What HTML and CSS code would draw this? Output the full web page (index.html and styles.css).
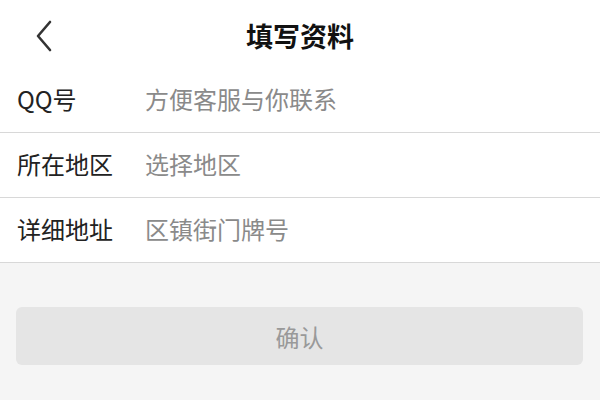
FILE: index.html
```html
<!DOCTYPE html>
<html>

<head>
	<meta charset="UTF-8">
	<meta name="viewport" content="width=device-width, initial-scale=1.0">
	<title>填写资料</title>
	<link rel="stylesheet" href="styles.css">
</head>

<body>
	<header class="topbar">
		<button class="btn-back" aria-label="返回">
			<svg width="18" height="32" viewBox="0 0 18 32">
				<path d="M15 2 L3 16 L15 30" fill="none" stroke="#333" stroke-width="2.6" stroke-linecap="round" stroke-linejoin="round"/>
			</svg>
		</button>
		<h1 class="title">填写资料</h1>
		<span class="spacer"></span>
	</header>

	<div class="form">
		<label class="row">
			<span class="label">QQ号</span>
			<input type="text" class="field" placeholder="方便客服与你联系">
		</label>
		<label class="row">
			<span class="label">所在地区</span>
			<input type="text" class="field" placeholder="选择地区">
		</label>
		<label class="row">
			<span class="label">详细地址</span>
			<input type="text" class="field" placeholder="区镇街门牌号">
		</label>
	</div>

	<div class="actions">
		<button class="btn-confirm" disabled>确认</button>
	</div>
</body>

</html>
```

FILE: styles.css
```css
* {
	margin: 0px;
	padding: 0px;
	box-sizing: border-box;
}

body {
	background-color: #f5f5f5;
	font-family: "Noto Sans CJK SC", "Noto Sans", sans-serif;
	color: #222;
	height: 400px;
}

.topbar {
	height: 68px;
	display: flex;
	align-items: center;
	background-color: #fff;
	padding: 0 20px;
}

.btn-back {
	width: 48px;
	height: 40px;
	display: flex;
	align-items: center;
	padding-left: 15px;
	padding-top: 4px;
	border: none;
	background: none;
}

.title {
	flex: 1;
	text-align: center;
	font-size: 27px;
	font-weight: bold;
	color: #111;
	margin-top: 2px;
}

.spacer {
	width: 48px;
}

.form {
	background-color: #fff;
}

.row {
	height: 65px;
	display: flex;
	align-items: center;
	padding-left: 17px;
	padding-bottom: 3px;
	border-bottom: 1px solid #d8d8d8;
}

.label {
	width: 128px;
	font-size: 24px;
	color: #222;
}

.field {
	flex: 1;
	border: none;
	outline: none;
	font-family: inherit;
	font-size: 24px;
	color: #222;
	background: transparent;
}

.field::placeholder {
	color: #8a8a8a;
}

.actions {
	padding: 44px 17px 0 16px;
}

.btn-confirm {
	width: 100%;
	height: 58px;
	border: none;
	border-radius: 6px;
	background-color: #e5e5e5;
	color: #999;
	font-family: inherit;
	font-size: 24px;
}
```
